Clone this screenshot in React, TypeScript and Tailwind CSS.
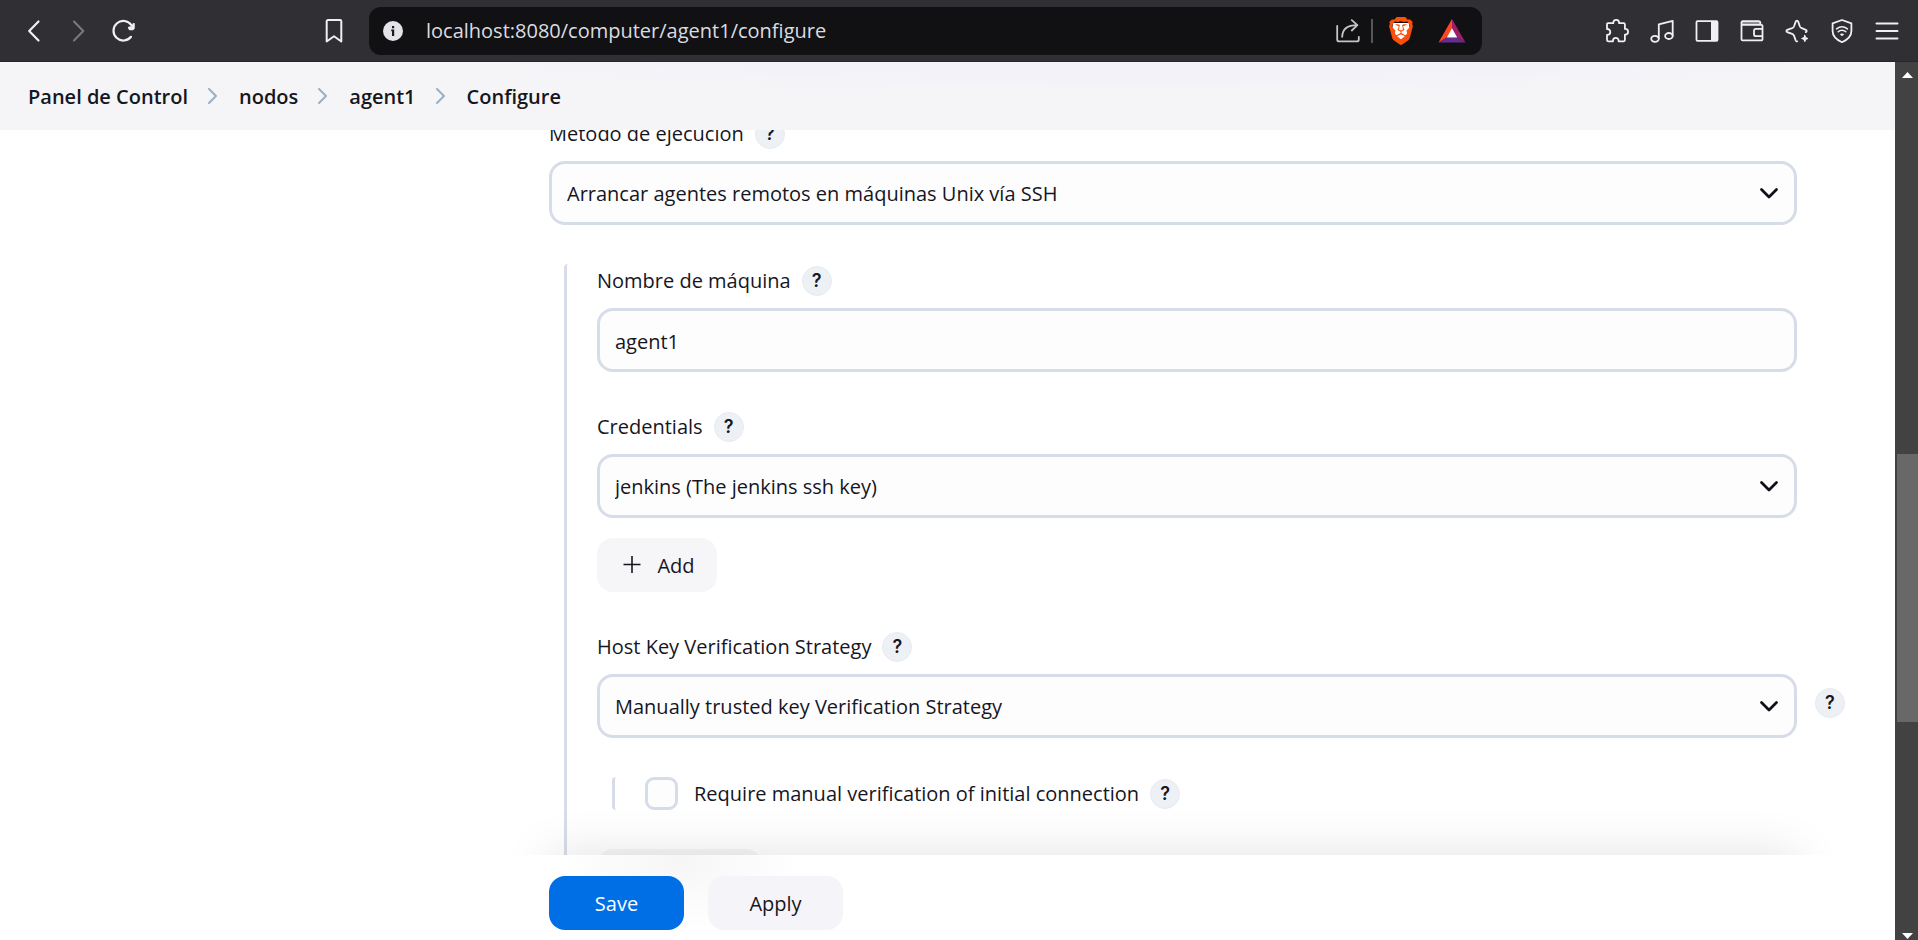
import type { ReactNode } from "react";
import { SiBrave } from "react-icons/si";

function Icon({ children, className = "" }: { children: ReactNode; className?: string }) {
  return (
    <svg
      viewBox="0 0 24 24"
      fill="none"
      stroke="currentColor"
      strokeWidth="1.8"
      strokeLinecap="round"
      strokeLinejoin="round"
      aria-hidden="true"
      className={`size-6 shrink-0 ${className}`}
    >
      {children}
    </svg>
  );
}

function ToolButton({ label, children, className = "" }: { label: string; children: ReactNode; className?: string }) {
  return (
    <button type="button" aria-label={label} className={`shrink-0 ${className}`}>
      {children}
    </button>
  );
}

function BrowserBar() {
  return (
    <div className="flex h-[62px] shrink-0 items-center border-b border-[#27262b] bg-[#302f34] text-[#f0f0f2]">
      <div className="flex w-[369px] shrink-0 items-center gap-[21px] pr-[23px] pl-[22px]">
        <ToolButton label="Back">
          <Icon>
            <path strokeWidth="2.2" d="M16.5 2.5 7.2 12l9.3 9.5" />
          </Icon>
        </ToolButton>
        <ToolButton label="Forward" className="text-[#7b7a80]">
          <Icon>
            <path strokeWidth="2" d="M7 2.5 16.3 12 7 21.5" />
          </Icon>
        </ToolButton>
        <ToolButton label="Reload">
          <Icon>
            <path strokeWidth="2.2" d="M19 17.8A9.8 9.8 0 1 1 19.4 6.2" />
            <path fill="currentColor" strokeWidth="1.5" d="M22 4.800v4.400l-1.200 1.200h-3.200l-1-1.800 3.600-.8 1.200-3z" />
          </Icon>
        </ToolButton>
        <ToolButton label="Bookmark this page" className="ml-auto">
          <Icon>
            <path strokeWidth="2" d="M4.700 2.200a1.200 1.200 0 0 1 1.200-1.200h12.200a1.200 1.200 0 0 1 1.200 1.200v20.300L12 17.300l-7.300 5.200z" />
          </Icon>
        </ToolButton>
      </div>

      <div className="flex h-12 min-w-0 flex-1 items-center rounded-xl bg-[#111113] pr-4 pl-[14px]">
        <svg viewBox="0 0 20 20" className="size-5 shrink-0" aria-hidden="true">
          <circle cx="10" cy="10" r="10" fill="#e3e3e8" />
          <path fill="#1b1b1e" d="M9 5h2.200v2.200H9zM8.200 8.600h3v6.400H9V10.200h-.8z" />
        </svg>
        <input
          aria-label="Address"
          defaultValue="localhost:8080/computer/agent1/configure"
          className="ml-[23px] min-w-0 flex-1 bg-transparent text-xl text-[#dcdce0] outline-none"
        />
        <div className="flex shrink-0 items-center">
          <ToolButton label="Share" className="text-[#c4c4c8]">
            <Icon>
              <path d="M1.200 6.800v13.600a2 2 0 0 0 2 2h17.600a2 2 0 0 0 2-2v-2.600" />
              <path d="M6.200 17.800C6.400 10.400 11 6.200 21 6.200M15.800 1.200l5.600 5-5.600 5.300" />
            </Icon>
          </ToolButton>
          <span className="ml-[11px] h-6 w-[2px] bg-[#55555a]" />
          <ToolButton label="Brave Shields" className="ml-[14px]">
            <svg viewBox="0 0 28 28" className="size-7" aria-hidden="true">
              <path fill="#fff" d="M6 6h16l1 8-5 9-4 2-4-2-5-9z" />
              <SiBrave size={28} color="#fb4f0b" />
            </svg>
          </ToolButton>
          <ToolButton label="Brave Rewards" className="ml-[23px]">
            <svg viewBox="0 0 28 28" className="size-7" aria-hidden="true">
              <path fill="#ff4724" d="M14 2v10L9.200 20.200.500 25.500z" />
              <path fill="#9e1f63" d="M14 2v10l4.800 8.200 8.700 5.300z" />
              <path fill="#662d91" d="M.500 25.500 9.200 20.200h9.600l8.700 5.300z" />
              <path fill="#fff" d="m14 11.300 5.200 9.200H8.800z" />
            </svg>
          </ToolButton>
        </div>
      </div>

      <div className="flex w-[436px] shrink-0 items-center justify-end gap-[21px] pr-[19px]">
        <ToolButton label="Extensions">
          <Icon>
            <path d="M3 4.200h5.300V3.800a2.900 2.900 0 0 1 5.800 0v.400h4.600a1.200 1.200 0 0 1 1.200 1.200v4.500h.3a2.900 2.900 0 0 1 0 5.800h-.3v5.400a1.200 1.200 0 0 1-1.200 1.200H13.600v-.6a2.800 2.800 0 0 0-5.600 0v.6H3.200A1.200 1.200 0 0 1 2 21.100v-5.300h.4a2.900 2.900 0 0 0 0-5.800H2V5.200a1 1 0 0 1 1-1z" />
          </Icon>
        </ToolButton>
        <ToolButton label="Playlist">
          <Icon>
            <path d="M8.800 19.300V5.300L22.700 1.800v14.800" />
            <ellipse cx="5" cy="19.800" rx="3.800" ry="3" />
            <ellipse cx="18.900" cy="17" rx="3.800" ry="3" />
          </Icon>
        </ToolButton>
        <ToolButton label="Sidebar">
          <Icon>
            <rect x="1.500" y="2.200" width="21" height="19.600" rx="1" />
            <path fill="currentColor" stroke="none" d="M16 2h6.800v20H16z" />
          </Icon>
        </ToolButton>
        <ToolButton label="Wallet">
          <Icon>
            <path fill="#8f8f94" stroke="none" d="M2 2.500h17.500l1.500 3H2z" />
            <path d="M1.500 5.800V3.400a1.200 1.200 0 0 1 1.200-1.200h15.800c1 0 1.800.6 1.800 1.800v1.800M1.500 5.800h19.800a1.200 1.200 0 0 1 1.200 1.200v13.200a1.200 1.200 0 0 1-1.200 1.200H2.700a1.200 1.200 0 0 1-1.200-1.200zM22.500 9.800H16a2 2 0 0 0-2 2v3.400a2 2 0 0 0 2 2h6.500" />
          </Icon>
        </ToolButton>
        <ToolButton label="Leo AI">
          <Icon>
            <path d="M20.800 13.100c1.200-.5 1.200-1.800 0-2.300l-4-1.600a3.500 3.500 0 0 1-2-2l-1.600-4.600c-.5-1.300-2-1.300-2.500 0L9.100 7.200a3.500 3.500 0 0 1-2 2l-4.800 1.700c-1.200.5-1.200 1.800 0 2.200l4.800 1.800a3.500 3.500 0 0 1 2 2l1.600 4.600c.3.800.9 1 1.500.8" />
            <path fill="currentColor" strokeWidth="1" d="m19.800 16.300.9 2.300 2.300.9-2.300.9-.9 2.300-.9-2.300-2.300-.9 2.300-.9z" />
          </Icon>
        </ToolButton>
        <ToolButton label="VPN">
          <Icon>
            <path d="m12 1 9.400 3.300v7.700c0 5-4 8.800-9.400 11.200C6.600 20.800 2.600 17 2.600 12V4.300z" />
            <path strokeWidth="1.600" d="M6.600 9.800c3.200-2.400 7.600-2.400 10.800 0M8.300 12.700c2.200-1.700 5.200-1.700 7.400 0" />
            <path fill="currentColor" stroke="none" d="M9.800 15.200c1.300-1 3.100-1 4.400 0L12 17.200z" />
          </Icon>
        </ToolButton>
        <ToolButton label="Menu">
          <Icon>
            <path strokeWidth="2" d="M1.500 4.500h21M1.500 12h21M1.500 19.500h21" />
          </Icon>
        </ToolButton>
      </div>
    </div>
  );
}

const crumbs = ["Panel de Control", "nodos", "agent1", "Configure"];

function Breadcrumbs() {
  return (
    <nav
      aria-label="Breadcrumbs"
      className="h-[68px] shrink-0 bg-[#f5f5f8] bg-[radial-gradient(closest-side,#f3f2f9_70%,transparent)] bg-[length:1300px_60px] bg-[position:500px_-32px] bg-no-repeat"
    >
      <ol className="flex h-full items-center pt-[2px] pl-7 text-xl font-semibold">
        {crumbs.map((name, i) => (
          <li key={name} className="flex items-center">
            {i > 0 && (
              <svg
                viewBox="0 0 12 18"
                className="mr-5 ml-[19px] h-[18px] w-3"
                fill="none"
                stroke="#9ab0c9"
                strokeWidth="2"
                strokeLinecap="round"
                strokeLinejoin="round"
                aria-hidden="true"
              >
                <path d="m2 1 7 7-7 7" />
              </svg>
            )}
            <a href="#">{name}</a>
          </li>
        ))}
      </ol>
    </nav>
  );
}

function Help({ about, className = "" }: { about: string; className?: string }) {
  return (
    <button
      type="button"
      aria-label={`Help: ${about}`}
      className={`flex size-[30px] shrink-0 items-center justify-center rounded-full border border-[#e6ebf0] bg-[#edf1f5] font-[Inter,sans-serif] text-lg leading-none font-semibold ${className}`}
    >
      ?
    </button>
  );
}

function FieldLabel({ id, text }: { id: string; text: string }) {
  return (
    <div className="mb-3 flex h-[31px] items-center gap-[11px]">
      <label htmlFor={id} className="pt-px">
        {text}
      </label>
      <Help about={text} />
    </div>
  );
}

function Select({ id, value }: { id: string; value: string }) {
  return (
    <div className="relative min-w-0 flex-1">
      <select
        id={id}
        className="block h-16 w-full appearance-none rounded-2xl border-3 border-[#d6dde8] bg-[#fdfdfe] pt-[2px] pr-14 pl-[15px]"
      >
        <option>{value}</option>
      </select>
      <svg
        viewBox="0 0 20 12"
        className="pointer-events-none absolute top-[26px] right-[18px] h-3 w-5"
        fill="none"
        stroke="#10101c"
        strokeWidth="2.8"
        strokeLinecap="round"
        strokeLinejoin="round"
        aria-hidden="true"
      >
        <path d="m2.500 2.500 7.500 7.500 7.500-7.500" />
      </svg>
    </div>
  );
}

function Scrollbar() {
  return (
    <div className="flex w-[23px] shrink-0 flex-col items-end bg-[#424242]" aria-hidden="true">
      <svg viewBox="0 0 23 16" className="h-4 w-[23px]">
        <path fill="#fff" d="M12.500 10 18 16H7z" />
      </svg>
      <div className="flex-[376]" />
      <div className="w-[21px] flex-[268] bg-[#686868]" />
      <div className="flex-[211]" />
      <svg viewBox="0 0 23 7" className="h-[7px] w-[23px]">
        <path fill="#fff" d="M7 0h11l-5.500 6z" />
      </svg>
    </div>
  );
}

export default function App() {
  return (
    <div className="flex h-screen flex-col overflow-hidden bg-white font-['Open_Sans','Noto_Sans',sans-serif] text-xl text-[#16161f]">
      <BrowserBar />
      <div className="flex min-h-0 flex-1">
        <div className="flex min-w-0 flex-1 flex-col">
          <Breadcrumbs />
          <main className="relative min-h-0 flex-1 overflow-hidden pr-[98px] pl-[549px]">
            <form id="node-config" className="-mt-3">
              <FieldLabel id="launcher" text="Método de ejecución" />
              <Select id="launcher" value="Arrancar agentes remotos en máquinas Unix vía SSH" />

              <div className="mt-[39px] ml-[15px] flex flex-col gap-[39px] rounded-t-sm border-l-3 border-[#d6dde8] pt-px pl-[30px]">
                <div>
                  <FieldLabel id="host" text="Nombre de máquina" />
                  <input
                    id="host"
                    type="text"
                    defaultValue="agent1"
                    className="block h-16 w-full rounded-2xl border-3 border-[#d6dde8] bg-[#fdfdfe] px-[15px] pt-[2px] outline-none"
                  />
                </div>

                <div>
                  <FieldLabel id="credentials" text="Credentials" />
                  <Select id="credentials" value="jenkins (The jenkins ssh key)" />
                  <button
                    type="button"
                    className="mt-5 flex h-[54px] w-[120px] items-center justify-center gap-4 rounded-2xl bg-[#f6f6f9] pt-[2px] pl-1"
                  >
                    <svg viewBox="0 0 18 20" className="h-5 w-[18px]" stroke="currentColor" strokeWidth="1.6" aria-hidden="true">
                      <path d="M9 0v17M.5 8.500h17" />
                    </svg>
                    Add
                  </button>
                </div>

                <div>
                  <FieldLabel id="strategy" text="Host Key Verification Strategy" />
                  <div className="flex">
                    <Select id="strategy" value="Manually trusted key Verification Strategy" />
                    <Help about="Manually trusted key Verification Strategy" className="mt-[14px] -mr-12 ml-[18px]" />
                  </div>
                </div>

                <div className="ml-[15px] flex h-[33px] items-center rounded-sm border-l-3 border-[#d6dde8] pl-[30px]">
                  <input
                    id="manual"
                    type="checkbox"
                    className="size-[33px] shrink-0 appearance-none rounded-[9px] border-3 border-[#d6dde8] bg-[#fdfdfe] checked:bg-[#006fe6]"
                  />
                  <label htmlFor="manual" className="mr-[11px] ml-4 pt-px">
                    Require manual verification of initial connection
                  </label>
                  <Help about="Require manual verification of initial connection" />
                </div>

                <button type="button" aria-label="Advanced" className="h-[54px] w-[165px] rounded-2xl bg-[#f6f6f9]" />
              </div>
            </form>
            <div className="pointer-events-none absolute top-full right-[98px] left-[549px] h-24 shadow-[0_0_50px_rgba(0,0,0,0.12)]" />
          </main>

          <footer className="flex h-[85px] shrink-0 items-start gap-6 bg-white bg-[radial-gradient(closest-side,#f6f6f7,transparent)] bg-[length:240px_140px] bg-[position:560px_-64px] bg-no-repeat pt-[21px] pr-[98px] pl-[549px]">
            <button form="node-config" type="submit" className="h-[54px] w-[135px] rounded-2xl bg-[#006fe6] pt-[2px] text-white">
              Save
            </button>
            <button type="button" className="h-[54px] w-[135px] rounded-2xl bg-[#f5f4f8] pt-[2px]">
              Apply
            </button>
          </footer>
        </div>
        <Scrollbar />
      </div>
    </div>
  );
}
